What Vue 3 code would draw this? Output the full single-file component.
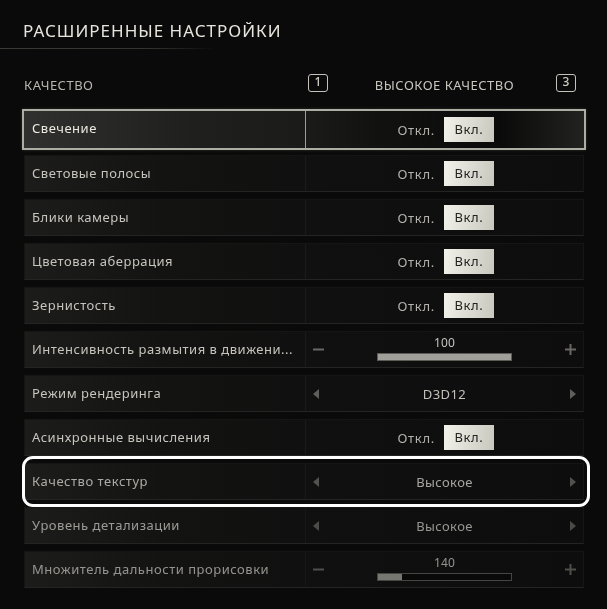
<script setup>
const rows = [
  { label: 'Свечение', type: 'toggle', selected: true, o: 1 },
  { label: 'Световые полосы', type: 'toggle', o: 1 },
  { label: 'Блики камеры', type: 'toggle', o: 1 },
  { label: 'Цветовая аберрация', type: 'toggle', o: 1 },
  { label: 'Зернистость', type: 'toggle', o: 1 },
  { label: 'Интенсивность размытия в движени...', type: 'slider', value: 100, pct: 100, o: 1 },
  { label: 'Режим рендеринга', type: 'select', value: 'D3D12', o: 1 },
  { label: 'Асинхронные вычисления', type: 'toggle', o: 1 },
  { label: 'Качество текстур', type: 'select', value: 'Высокое', o: 0.85, marked: true },
  { label: 'Уровень детализации', type: 'select', value: 'Высокое', o: 0.76 },
  { label: 'Множитель дальности прорисовки', type: 'slider', value: 140, pct: 18, o: 0.72 }
]
</script>

<template>
  <main class="page">
    <h1 class="title">РАСШИРЕННЫЕ НАСТРОЙКИ</h1>
    <div class="rule"></div>
    <header class="head">
      <span class="head-label">КАЧЕСТВО</span>
      <div class="head-right">
        <span class="key">1</span>
        <span class="head-value">ВЫСОКОЕ КАЧЕСТВО</span>
        <span class="key">3</span>
      </div>
    </header>
    <section class="list">
      <div v-for="r in rows" :key="r.label" class="row" :class="{ selected: r.selected, marked: r.marked }">
        <div class="label" :style="{ opacity: r.o }">{{ r.label }}</div>
        <div class="control" :style="{ opacity: r.o }">
          <div v-if="r.type === 'toggle'" class="toggle">
            <span class="off">Откл.</span>
            <span class="on">Вкл.</span>
          </div>
          <div v-else-if="r.type === 'select'" class="select">
            <svg class="arrow" width="6" height="10" viewBox="0 0 6 10"><path d="M6 0V10L0 5Z" /></svg>
            <span class="value">{{ r.value }}</span>
            <svg class="arrow" width="6" height="10" viewBox="0 0 6 10"><path d="M0 0V10L6 5Z" /></svg>
          </div>
          <div v-else class="slider">
            <svg class="sign" width="11" height="11" viewBox="0 0 11 11"><path d="M0 4.5H11V6.5H0Z" /></svg>
            <div class="mid">
              <span class="num">{{ r.value }}</span>
              <div class="track"><div class="fill" :style="{ width: r.pct + '%' }"></div></div>
            </div>
            <svg class="sign" width="11" height="11" viewBox="0 0 11 11"><path d="M0 4.5H4.5V0H6.5V4.5H11V6.5H6.5V11H4.5V6.5H0Z" /></svg>
          </div>
        </div>
      </div>
    </section>
  </main>
</template>

<style scoped>
.page {
  width: 607px;
  height: 609px;
  box-sizing: border-box;
  background: #0a0a0a;
  font-family: "Noto Sans", "Open Sans", sans-serif;
  overflow: hidden;
  padding-top: 19px;
  filter: blur(0.4px);
}
.title {
  margin: 0 0 0 23px;
  font-size: 17px;
  line-height: 23px;
  font-weight: 400;
  letter-spacing: 1px;
  color: #e6e4dc;
}
.rule {
  height: 1px;
  width: 215px;
  margin-top: 6px;
  background: linear-gradient(90deg, #3a3a37, #33332f 70%, rgba(50, 50, 46, 0));
}
.head {
  display: flex;
  align-items: center;
  height: 26px;
  margin: 23px 0 0 24px;
  width: 560px;
}
.head-label {
  width: 280px;
  font-size: 13px;
  letter-spacing: 0.5px;
  color: #b8b6af;
}
.head-right {
  flex: 1;
  display: flex;
  align-items: center;
  justify-content: space-between;
  padding-left: 4px;
  padding-right: 8px;
}
.head-value {
  margin-left: 5px;
  font-size: 13px;
  letter-spacing: 0.5px;
  color: #c8c6bf;
}
.key {
  box-sizing: border-box;
  width: 20px;
  height: 18px;
  border: 1.5px solid #c4c2bb;
  border-radius: 3px;
  margin-top: -4px;
  font-size: 12px;
  font-weight: 500;
  line-height: 14px;
  text-align: center;
  color: #d0cec7;
}
.list {
  display: flex;
  flex-direction: column;
  gap: 7px;
  width: 560px;
  margin: 13px 0 0 24px;
}
.row {
  position: relative;
  display: flex;
  height: 37px;
  box-sizing: border-box;
  background: linear-gradient(90deg, #1c1c1b 0, #131312 25%, #101010 50%, #0d0d0d 100%);
  border: 1px solid #151514;
  border-bottom-color: #242423;
}
.row.selected {
  margin: -2px -2px -2px -2px;
  height: 41px;
  padding: 0 1px;
  border: 2px solid #aeada4;
  background: linear-gradient(90deg, #30302e 0, #1f1f1d 30%, #1b1b1a 50%, #121211 62%, #0a0a0a 85%, #222220);
  box-shadow: 0 0 3px rgba(150, 150, 140, 0.25);
}
.row.marked::after {
  content: "";
  position: absolute;
  left: -3px;
  right: -7px;
  top: -8px;
  bottom: -8px;
  border: 3.5px solid #fff;
  border-radius: 11px;
}
.label {
  width: 280px;
  box-sizing: border-box;
  padding-left: 7px;
  font-size: 13px;
  line-height: 35px;
  letter-spacing: 0.52px;
  color: #c6c4bd;
  white-space: nowrap;
}
.selected .label {
  color: #eceae3;
}
.control {
  flex: 1;
  display: flex;
  align-items: center;
  justify-content: center;
  border-left: 1px solid #1b1b1a;
}
.selected .control {
  border-left: 1px solid #a09f96;
}
.toggle {
  display: flex;
  align-items: center;
}
.off {
  width: 40px;
  margin-right: 9px;
  font-size: 13px;
  letter-spacing: 0.7px;
  text-align: right;
  color: #b4b2ac;
}
.on {
  width: 50px;
  height: 25px;
  font-size: 13px;
  line-height: 24px;
  letter-spacing: 0.6px;
  text-align: center;
  color: #222220;
  background: linear-gradient(100deg, #f2f1ea, #c9c8be);
}
.select,
.slider {
  flex: 1;
  display: flex;
  align-items: center;
  justify-content: space-between;
  padding: 0 7px;
}
.value {
  font-size: 13px;
  letter-spacing: 0.4px;
  color: #c2c0ba;
}
.arrow {
  fill: #5f5e5a;
}
.sign {
  fill: #686763;
}
.mid {
  display: flex;
  flex-direction: column;
  align-items: center;
  margin-top: -3px;
}
.num {
  font-size: 12px;
  line-height: 15px;
  letter-spacing: 0.2px;
  color: #c6c4be;
}
.track {
  box-sizing: border-box;
  width: 135px;
  height: 8px;
  margin-top: 3px;
  border: 1px solid #5c5b56;
  background: #080808;
}
.fill {
  height: 100%;
  background: #a09f99;
}
</style>
